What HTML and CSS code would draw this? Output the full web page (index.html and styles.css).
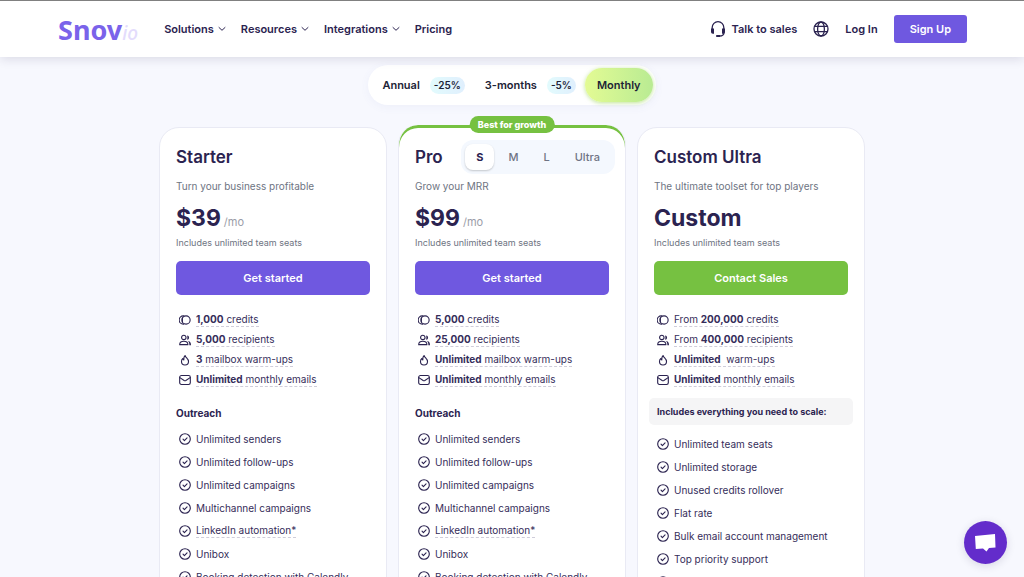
FILE: index.html
```html
<!DOCTYPE html>
<html lang="en">
<head>
    <meta charset="UTF-8">
    <meta name="viewport" content="width=device-width, initial-scale=1.0">
    <title>Snov.io Pricing</title>
    <link rel="stylesheet" href="styles.css">
</head>
<body>

<!-- icon sprite -->
<svg class="sprite" width="0" height="0" aria-hidden="true">
    <symbol id="chevron" viewBox="0 0 8 8"><path d="M1 2.5 4 5.3 7 2.5"/></symbol>
    <symbol id="headset" viewBox="0 0 16 18"><path d="M2.2 9V7.5a5.8 5.8 0 0 1 11.6 0V9M14 12.5c0 2.4-1.6 3.5-4.5 3.5"/><path class="solid" d="M1 8.6h3v5.2H2.8A1.8 1.8 0 0 1 1 12zM12 8.6h3V12a1.8 1.8 0 0 1-1.800 1.800H12zM6.2 15h3.800v2H6.200z"/></symbol>
    <symbol id="globe" viewBox="0 0 16 16"><circle cx="8" cy="8" r="7"/><ellipse cx="8" cy="8" rx="3.4" ry="7"/><path d="M1.8 5.4h12.4M1.8 10.6h12.4"/></symbol>
    <symbol id="credits" viewBox="0 0 14 14"><circle cx="8.2" cy="7" r="4.8"/><path d="M5.600 2.200H5a4.800 4.800 0 0 0 0 9.600h.6M3.900 4.500v5"/></symbol>
    <symbol id="people" viewBox="0 0 14 14"><circle cx="5.6" cy="4" r="2.6"/><path d="M.8 12.4c0-2.700 2-4 4.800-4s4.800 1.300 4.800 4z"/><path class="solid" d="M9.300 1.800a2.500 2.500 0 0 1 0 5c.7-1.500.7-3.500 0-5zM10.200 8c2.400.4 3.800 1.800 3.800 5h-1.900c0-2.300-.5-3.800-1.900-5z"/></symbol>
    <symbol id="flame" viewBox="0 0 14 14"><path d="M7.200 1.800c.4 2.400 3.900 3.600 3.900 6.900a4.100 4.100 0 0 1-8.200 0c0-1.500.6-2.600 1.600-3.400.2.800.5 1.300 1.100 1.600C5.400 4.800 5.800 3 7.200 1.800z"/></symbol>
    <symbol id="mail" viewBox="0 0 14 14"><rect x="0.800" y="1.800" width="12.400" height="10.400" rx="2"/><path d="M1 4.200 6 7.600q1 .6 2 0l5-3.400"/></symbol>
    <symbol id="check" viewBox="0 0 14 14"><circle cx="7" cy="7" r="6.200"/><path d="M4.700 7.200 6.300 8.800 9.400 5.700"/></symbol>
</svg>

<header class="header">
    <a class="logo" href="#">Snov<span class="logo-io">io</span></a>
    <nav class="nav">
        <a href="#">Solutions <svg class="icon chevron"><use href="#chevron"/></svg></a>
        <a href="#">Resources <svg class="icon chevron"><use href="#chevron"/></svg></a>
        <a href="#">Integrations <svg class="icon chevron"><use href="#chevron"/></svg></a>
        <a href="#">Pricing</a>
    </nav>
    <div class="header-actions">
        <a class="talk" href="#"><svg class="icon headset"><use href="#headset"/></svg> Talk to sales</a>
        <button class="lang" type="button" aria-label="Language"><svg class="icon globe"><use href="#globe"/></svg></button>
        <a href="#">Log In</a>
        <a class="signup" href="#">Sign Up</a>
    </div>
</header>

<main>
    <div class="periods">
        <button class="period" type="button">Annual <span class="discount">-25%</span></button>
        <button class="period" type="button">3-months <span class="discount">-5%</span></button>
        <button class="period active" type="button">Monthly</button>
    </div>

    <div class="plans">
        <section class="plan">
            <div class="plan-head">
                <h2>Starter</h2>
            </div>
            <p class="desc">Turn your business profitable</p>
            <p class="price">$39 <span class="per">/mo</span></p>
            <p class="seats">Includes unlimited team seats</p>
            <button class="cta" type="button">Get started</button>
            <ul class="limits">
                <li><svg class="icon"><use href="#credits"/></svg><span class="hint"><b>1,000</b> credits</span></li>
                <li><svg class="icon"><use href="#people"/></svg><span class="hint"><b>5,000</b> recipients</span></li>
                <li><svg class="icon"><use href="#flame"/></svg><span class="hint"><b>3</b> mailbox warm-ups</span></li>
                <li><svg class="icon"><use href="#mail"/></svg><span class="hint"><b>Unlimited</b> monthly emails</span></li>
            </ul>
            <h3>Outreach</h3>
            <ul class="features">
                <li><svg class="icon"><use href="#check"/></svg>Unlimited senders</li>
                <li><svg class="icon"><use href="#check"/></svg>Unlimited follow-ups</li>
                <li><svg class="icon"><use href="#check"/></svg>Unlimited campaigns</li>
                <li><svg class="icon"><use href="#check"/></svg>Multichannel campaigns</li>
                <li><svg class="icon"><use href="#check"/></svg><span class="hint">LinkedIn automation*</span></li>
                <li><svg class="icon"><use href="#check"/></svg>Unibox</li>
                <li><svg class="icon"><use href="#check"/></svg>Booking detection with Calendly</li>
            </ul>
        </section>

        <section class="plan plan-pro">
            <span class="badge">Best for growth</span>
            <div class="plan-head">
                <h2>Pro</h2>
                <div class="sizes">
                    <button class="size active" type="button">S</button>
                    <button class="size" type="button">M</button>
                    <button class="size" type="button">L</button>
                    <button class="size" type="button">Ultra</button>
                </div>
            </div>
            <p class="desc">Grow your MRR</p>
            <p class="price">$99 <span class="per">/mo</span></p>
            <p class="seats">Includes unlimited team seats</p>
            <button class="cta" type="button">Get started</button>
            <ul class="limits">
                <li><svg class="icon"><use href="#credits"/></svg><span class="hint"><b>5,000</b> credits</span></li>
                <li><svg class="icon"><use href="#people"/></svg><span class="hint"><b>25,000</b> recipients</span></li>
                <li><svg class="icon"><use href="#flame"/></svg><span class="hint"><b>Unlimited</b> mailbox warm-ups</span></li>
                <li><svg class="icon"><use href="#mail"/></svg><span class="hint"><b>Unlimited</b> monthly emails</span></li>
            </ul>
            <h3>Outreach</h3>
            <ul class="features">
                <li><svg class="icon"><use href="#check"/></svg>Unlimited senders</li>
                <li><svg class="icon"><use href="#check"/></svg>Unlimited follow-ups</li>
                <li><svg class="icon"><use href="#check"/></svg>Unlimited campaigns</li>
                <li><svg class="icon"><use href="#check"/></svg>Multichannel campaigns</li>
                <li><svg class="icon"><use href="#check"/></svg><span class="hint">LinkedIn automation*</span></li>
                <li><svg class="icon"><use href="#check"/></svg>Unibox</li>
                <li><svg class="icon"><use href="#check"/></svg>Booking detection with Calendly</li>
            </ul>
        </section>

        <section class="plan">
            <div class="plan-head">
                <h2>Custom Ultra</h2>
            </div>
            <p class="desc">The ultimate toolset for top players</p>
            <p class="price">Custom</p>
            <p class="seats">Includes unlimited team seats</p>
            <button class="cta cta-green" type="button">Contact Sales</button>
            <ul class="limits">
                <li><svg class="icon"><use href="#credits"/></svg><span class="hint">From <b>200,000</b> credits</span></li>
                <li><svg class="icon"><use href="#people"/></svg><span class="hint">From <b>400,000</b> recipients</span></li>
                <li><svg class="icon"><use href="#flame"/></svg><span class="hint"><b>Unlimited</b>&nbsp; warm-ups</span></li>
                <li><svg class="icon"><use href="#mail"/></svg><span class="hint"><b>Unlimited</b> monthly emails</span></li>
            </ul>
            <h3 class="scale">Includes everything you need to scale:</h3>
            <ul class="features">
                <li><svg class="icon"><use href="#check"/></svg>Unlimited team seats</li>
                <li><svg class="icon"><use href="#check"/></svg>Unlimited storage</li>
                <li><svg class="icon"><use href="#check"/></svg>Unused credits rollover</li>
                <li><svg class="icon"><use href="#check"/></svg>Flat rate</li>
                <li><svg class="icon"><use href="#check"/></svg>Bulk email account management</li>
                <li><svg class="icon"><use href="#check"/></svg>Top priority support</li>
                <li><svg class="icon"><use href="#check"/></svg></li>
            </ul>
        </section>
    </div>
</main>

<button class="chat" type="button" aria-label="Open chat">
    <svg width="24" height="24" viewBox="0 0 24 24"><path fill="#fff" d="M1 5 21 3 21.500 16.500 15 17 12.500 20.500 9 17.500 1.800 18z"/></svg>
</button>

</body>
</html>
```

FILE: styles.css
```css
* {
    box-sizing: border-box;
}
body {
    font-family: Inter, "Liberation Sans", sans-serif;
    font-size: 10px;
    margin: 0;
    background-color: #f7f8fe;
    color: #2b2350;
}
a {
    color: inherit;
    text-decoration: none;
}
button {
    font-family: inherit;
    color: inherit;
    border: none;
    padding: 0;
    background: none;
    cursor: pointer;
}
h2, h3, p, ul {
    margin: 0;
    padding: 0;
}
.sprite {
    display: block;
}
.icon {
    width: 12px;
    height: 12px;
    flex: none;
    fill: none;
    stroke: #2b2350;
    stroke-width: 1.3;
    stroke-linecap: round;
    stroke-linejoin: round;
}
.solid {
    fill: #2b2350;
    stroke: none;
}

/* header */
.header {
    position: sticky;
    top: 0;
    z-index: 10;
    height: 57px;
    padding: 0 57px 0 58px;
    display: flex;
    align-items: center;
    background-color: white;
    border-top: 1px solid #808080;
    box-shadow: 0 2px 10px rgba(43, 35, 80, 0.14);
    font-size: 11px;
    font-weight: 600;
}
.logo {
    font-family: "Noto Sans", sans-serif;
    font-size: 27px;
    font-weight: 700;
    color: #7a63ea;
}
.logo-io {
    font-size: 19px;
    font-style: italic;
    font-weight: 500;
    color: #e3dcfc;
}
.nav {
    display: flex;
    gap: 15px;
    margin-left: 26px;
}
.nav a, .talk {
    display: flex;
    align-items: center;
    gap: 4px;
}
.chevron {
    width: 8px;
    height: 8px;
    stroke-width: 1;
}
.header-actions {
    display: flex;
    align-items: center;
    gap: 16px;
    margin-left: auto;
}
.talk {
    gap: 6px;
}
.headset {
    width: 16px;
    height: 18px;
}
.lang {
    display: flex;
}
.globe {
    width: 16px;
    height: 16px;
}
.signup {
    padding: 0 16px;
    line-height: 28px;
    border-radius: 3px;
    background-color: #6f58e0;
    color: white;
}

/* billing period */
.periods {
    display: flex;
    width: fit-content;
    margin: 8px auto 0;
    padding: 3px;
    border-radius: 20px;
    background-color: white;
    box-shadow: 0 2px 10px rgba(90, 100, 180, 0.06);
}
.period {
    display: flex;
    align-items: center;
    gap: 10px;
    height: 34px;
    padding: 0 9px 0 11px;
    border-radius: 17px;
    font-size: 11px;
    font-weight: 600;
    color: #1c2336;
}
.period.active {
    padding: 0 12px;
    background: linear-gradient(90deg, #e3fb94, #b9eb93);
    box-shadow: 0 1px 4px rgba(150, 210, 80, 0.6);
}
.discount {
    padding: 0 4px;
    line-height: 17px;
    border-radius: 9px;
    background: linear-gradient(90deg, #e2fbfd, #e0effd);
    font-size: 10px;
}

/* plans */
.plans {
    display: grid;
    grid-template-columns: repeat(3, 1fr);
    gap: 11px;
    max-width: 706px;
    margin: 22px auto 40px;
}
.plan {
    padding: 12px 16px 24px;
    border: 1px solid #e9eaf4;
    border-radius: 20px;
    background-color: white;
}
.plan-pro {
    position: relative;
    margin-top: -2px;
    padding-top: 15px;
    border-top: none;
    box-shadow: inset 0 3px 0 #76c141;
}
.badge {
    position: absolute;
    top: -9px;
    left: 50%;
    transform: translateX(-50%);
    padding: 0 8px;
    line-height: 17px;
    border-radius: 9px;
    background-color: #76c141;
    color: white;
    font-size: 9px;
    font-weight: 800;
    white-space: nowrap;
}
.plan-head {
    display: flex;
    justify-content: space-between;
    align-items: center;
    height: 34px;
}
.plan h2 {
    font-size: 17px;
    font-weight: 600;
}
.sizes {
    display: flex;
    gap: 3px;
    height: 34px;
    margin-right: -6px;
    padding: 4px;
    border-radius: 12px;
    background-color: #f4f8fe;
}
.size {
    padding: 0 11px;
    border-radius: 8px;
    font-size: 11px;
    font-weight: 500;
    color: #6f7484;
}
.size.active {
    background-color: white;
    box-shadow: 0 1px 2px rgba(0, 0, 0, 0.2);
    color: #2b2350;
    font-weight: 700;
}
.desc {
    margin-top: 4px;
    line-height: 16px;
    color: #6e7482;
}
.price {
    display: flex;
    align-items: baseline;
    gap: 3px;
    height: 30px;
    margin-top: 9px;
    line-height: 30px;
    font-size: 23px;
    font-weight: 700;
}
.per {
    font-size: 11px;
    font-weight: 400;
    color: #9b9da8;
}
.seats {
    margin-top: 3px;
    line-height: 14px;
    font-size: 9px;
    color: #6e7482;
}
.cta {
    width: 100%;
    margin-top: 11px;
    height: 34px;
    border-radius: 5px;
    background-color: #6f58e0;
    color: white;
    font-size: 11px;
    font-weight: 600;
}
.cta-green {
    background-color: #76c141;
}
.limits, .features {
    list-style: none;
    padding-left: 3px;
    color: #352d5a;
}
.limits {
    margin-top: 15px;
}
.limits li, .features li {
    display: flex;
    align-items: center;
    gap: 5px;
    height: 20px;
}
.features li {
    height: 19px;
    margin-bottom: 4px;
}
.hint {
    line-height: 13px;
    border-bottom: 1px dashed #cfcdda;
}
.plan h3 {
    margin: 15px 0 8px;
    line-height: 16px;
    font-size: 10px;
    font-weight: 700;
}
.plan .scale {
    margin: 8px -5px 9px;
    padding: 0 8px;
    line-height: 27px;
    border-radius: 5px;
    background-color: #f5f5f6;
    font-size: 9px;
}

/* chat widget */
.chat {
    position: fixed;
    right: 17px;
    bottom: 13px;
    width: 43px;
    height: 43px;
    display: flex;
    align-items: center;
    justify-content: center;
    border-radius: 50%;
    background-color: #632ccb;
    box-shadow: 0 2px 8px rgba(43, 35, 80, 0.15);
}
```
